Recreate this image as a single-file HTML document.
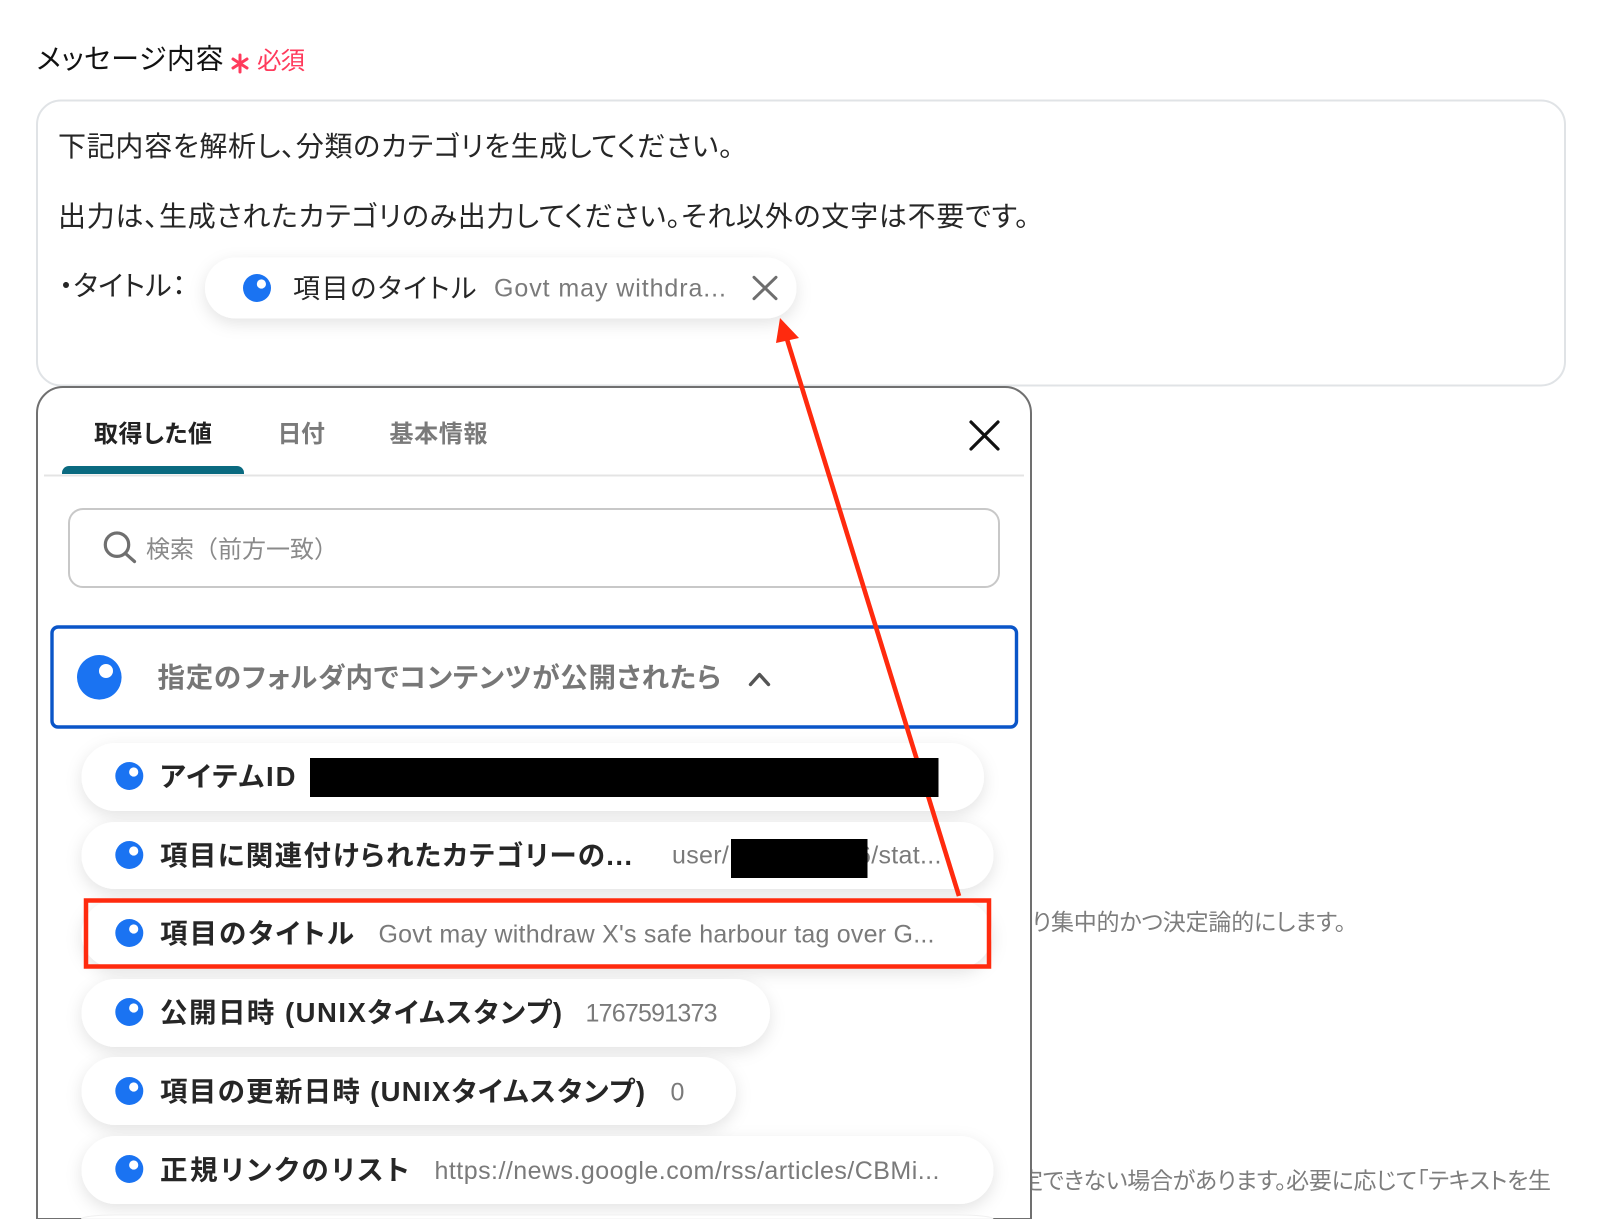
<!DOCTYPE html>
<html lang="ja">
<head>
<meta charset="utf-8">
<title>メッセージ内容</title>
<style>
html,body{margin:0;padding:0;background:#fff;width:1600px;height:1219px;overflow:hidden}
svg{display:block}
text{font-family:"Liberation Sans","Noto Sans CJK JP",sans-serif;font-feature-settings:"palt";white-space:pre}
.n{font-size:28px;fill:#262626}
.c{font-size:27px;fill:#262626}
.b{font-size:27.5px;font-weight:700;fill:#262626}
.v{font-size:25px;fill:#7a7a7a}
.bg{font-size:23px;fill:#7d7d7d}
</style>
</head>
<body>
<svg width="1600" height="1219" viewBox="0 0 1600 1219" xmlns="http://www.w3.org/2000/svg">
<defs>
<filter id="s" x="-10%" y="-40%" width="120%" height="200%"><feDropShadow dx="0" dy="5" stdDeviation="8" flood-color="#000" flood-opacity=".11"/></filter>
<g id="i"><circle r="14" fill="#1a73f2"/><circle cx="4.4" cy="-4" r="4.6" fill="#fff"/></g>
</defs>
<rect width="1600" height="1219" fill="#fff"/>

<text x="36.5" y="68.5" class="n" style="fill:#111" textLength="187" lengthAdjust="spacing">メッセージ内容</text>
<g stroke="#ff3b5c" stroke-width="3" stroke-linecap="round"><path d="M240 55V72M233 59l14 9M247 59l-14 9"/></g>
<text x="257" y="69" style="font-size:24.5px;fill:#ff3b5c" textLength="48" lengthAdjust="spacing">必須</text>

<rect x="37" y="100.5" width="1528" height="285" rx="24" fill="#fff" stroke="#e0e3e6" stroke-width="2"/>
<text x="58" y="156" class="n" textLength="675" lengthAdjust="spacing">下記内容を解析し、分類のカテゴリを生成してください。</text>
<text x="58" y="226" class="n" textLength="971" lengthAdjust="spacing">出力は、生成されたカテゴリのみ出力してください。それ以外の文字は不要です。</text>
<text x="59" y="295.5" class="n" textLength="127" lengthAdjust="spacing">・タイトル：</text>

<rect x="205" y="257.5" width="591.5" height="61" rx="30.5" fill="#fff" filter="url(#s)"/>
<use href="#i" x="257" y="288"/>
<text x="293" y="298" class="c" textLength="183.5" lengthAdjust="spacing">項目のタイトル</text>
<text x="494" y="296.5" class="v" textLength="232" lengthAdjust="spacing">Govt may withdra...</text>
<path d="M754 277.3L776 298.7M776 277.3L754 298.7" stroke="#6e6e6e" stroke-width="3" stroke-linecap="round"/>

<text x="1346" y="930" class="bg" text-anchor="end" textLength="314" lengthAdjust="spacing">り集中的かつ決定論的にします。</text>
<text x="1551" y="1188.5" class="bg" text-anchor="end" textLength="531" lengthAdjust="spacing">定できない場合があります。必要に応じて「テキストを生</text>

<path d="M37 1219V413a26 26 0 0 1 26-26H1005a26 26 0 0 1 26 26V1219Z" fill="#fff" stroke="#707070" stroke-width="2"/>

<text x="94" y="442" style="font-size:24px;font-weight:700;fill:#222" textLength="118" lengthAdjust="spacing">取得した値</text>
<text x="277.5" y="442" style="font-size:24px;font-weight:700;fill:#7a7a7a" textLength="47.5" lengthAdjust="spacing">日付</text>
<text x="389.5" y="442" style="font-size:24px;font-weight:700;fill:#7a7a7a" textLength="98" lengthAdjust="spacing">基本情報</text>
<path d="M971 422L998 449M998 422L971 449" stroke="#111" stroke-width="3.2" stroke-linecap="round"/>
<path d="M62 474V473a7 7 0 0 1 7-7H237a7 7 0 0 1 7 7v1z" fill="#0a6a80"/>
<rect x="44" y="474.5" width="980" height="2" fill="#e4e4e4"/>

<rect x="69" y="509" width="930" height="78" rx="14" fill="#fff" stroke="#c8c8c8" stroke-width="2"/>
<circle cx="117" cy="544.7" r="11.7" fill="none" stroke="#6f6f6f" stroke-width="3.2"/>
<path d="M125.5 553.5L134.5 561.5" stroke="#6f6f6f" stroke-width="3.2" stroke-linecap="round"/>
<text x="146" y="557.5" style="font-size:24px;fill:#8a8a8a;font-feature-settings:normal" textLength="192" lengthAdjust="spacing">検索（前方一致）</text>

<rect x="52" y="627" width="964.5" height="100" rx="6" fill="#fff" stroke="#0a55c8" stroke-width="3.4"/>
<circle cx="99.3" cy="677.3" r="22.3" fill="#1a73f2"/><circle cx="106" cy="671" r="7" fill="#fff"/>
<text x="157.5" y="687" class="b" style="fill:#777" textLength="563.5" lengthAdjust="spacing">指定のフォルダ内でコンテンツが公開されたら</text>
<path d="M750.5 684.5L759.5 674.5L768.5 684.5" fill="none" stroke="#555" stroke-width="3.4" stroke-linecap="round" stroke-linejoin="round"/>

<rect x="81.5" y="743" width="902.5" height="68" rx="34" fill="#fff" filter="url(#s)"/>
<rect x="81.5" y="822" width="912" height="67" rx="33.5" fill="#fff" filter="url(#s)"/>
<rect x="81.5" y="900" width="910.5" height="68" rx="34" fill="#fff" filter="url(#s)"/>
<rect x="81.5" y="979" width="688.5" height="68" rx="34" fill="#fff" filter="url(#s)"/>
<rect x="81.5" y="1057" width="654.5" height="68" rx="34" fill="#fff" filter="url(#s)"/>
<rect x="81.5" y="1136" width="912" height="68" rx="34" fill="#fff" filter="url(#s)"/>
<path d="M81.5 1219a34 4 0 0 1 34-4H959a34 4 0 0 1 34 4Z" fill="#fff" stroke="#f0f0f0"/>

<use href="#i" x="129.3" y="776"/>
<text x="160" y="786" class="b" textLength="135.5" lengthAdjust="spacing">アイテムID</text>

<use href="#i" x="129.3" y="855"/>
<text x="160" y="865" class="b" textLength="472" lengthAdjust="spacing">項目に関連付けられたカテゴリーの...</text>
<text x="672" y="863.5" class="v" textLength="269.5" lengthAdjust="spacing">user/1234567896/stat...</text>

<use href="#i" x="129.3" y="933"/>
<text x="160" y="943" class="b" textLength="194" lengthAdjust="spacing">項目のタイトル</text>
<text x="378.5" y="942.5" class="v" textLength="556" lengthAdjust="spacing">Govt may withdraw X's safe harbour tag over G...</text>

<use href="#i" x="129.3" y="1012"/>
<text x="160" y="1022" class="b" textLength="402" lengthAdjust="spacing">公開日時 (UNIXタイムスタンプ)</text>
<text x="585.5" y="1021.5" class="v" textLength="132" lengthAdjust="spacing">1767591373</text>

<use href="#i" x="129.3" y="1091"/>
<text x="160" y="1101" class="b" textLength="485" lengthAdjust="spacing">項目の更新日時 (UNIXタイムスタンプ)</text>
<text x="670.5" y="1100.5" class="v" textLength="13.5" lengthAdjust="spacing">0</text>

<use href="#i" x="129.3" y="1169"/>
<text x="160" y="1179.5" class="b" textLength="249" lengthAdjust="spacing">正規リンクのリスト</text>
<text x="434.5" y="1179" class="v" textLength="505" lengthAdjust="spacing">https://news.google.com/rss/articles/CBMi...</text>

<rect x="86" y="900.5" width="903" height="66" fill="none" stroke="#ff2a0e" stroke-width="4.5"/>
<path d="M959 896L786 336" stroke="#ff2a0e" stroke-width="4.6"/>
<path d="M780 318L776 343L799 338Z" fill="#ff2a0e"/>

<rect x="310" y="758" width="628.5" height="39" fill="#000"/>
<rect x="731" y="839" width="136.5" height="39" fill="#000"/>
</svg>
</body>
</html>
